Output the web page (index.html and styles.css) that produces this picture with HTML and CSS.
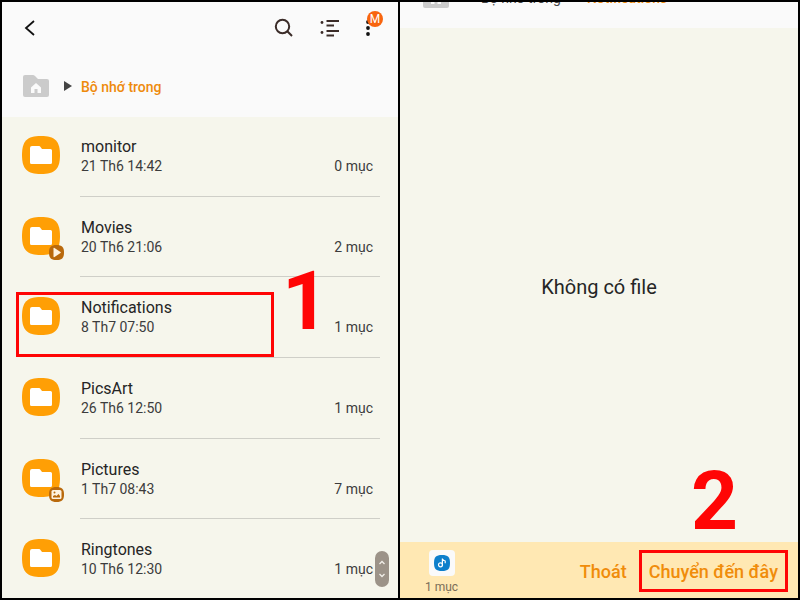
FILE: index.html
```html
<!DOCTYPE html>
<html lang="vi">
<head>
  <meta charset="UTF-8">
  <meta name="viewport" content="width=device-width, initial-scale=1.0">
  <title>Bộ nhớ trong</title>
  <link rel="stylesheet" href="styles.css">
</head>
<body>
  <svg class="defs" aria-hidden="true">
    <symbol id="folder" viewBox="0 0 38 38">
      <path fill="#ff9f05" d="M19 0C33 0 38 5 38 19S33 38 19 38 0 33 0 19 5 0 19 0Z"/>
      <path fill="#fff" d="M10 10h7q1 0 1.500 1l1.500 2h8.500q1.500 0 1.500 1.500v12q0 1.500-1.500 1.500H9.500Q8 28 8 26.500V12q0-2 2-2Z"/>
    </symbol>
    <symbol id="home" viewBox="0 0 26 22">
      <path fill="#cbcbcb" d="M2 0h8q1 0 2 1l3 3h9q2 0 2 2v14q0 2-2 2H2q-2 0-2-2V2q0-2 2-2Z"/>
      <path fill="#fafafa" d="M13 8l5 4.500V18h-3.500v-4h-3v4H8v-5.500Z"/>
    </symbol>
  </svg>

  <div class="screens">
    <section class="screen">
      <header class="header">
        <div class="toolbar">
          <button class="icon-btn back" aria-label="Quay lại">
            <svg width="12" height="18" viewBox="0 0 12 18"><path d="M10 2L2 9l8 7" fill="none" stroke="#111" stroke-width="1.800"/></svg>
          </button>
          <button class="icon-btn" aria-label="Tìm kiếm">
            <svg width="20" height="20" viewBox="0 0 20 20" fill="none" stroke="#3b2c28" stroke-width="2"><circle cx="8.500" cy="8.500" r="6.700"/><path d="M13.300 13.300L18 18"/></svg>
          </button>
          <button class="icon-btn" aria-label="Sắp xếp">
            <svg width="20" height="18" viewBox="0 0 20 18" fill="#3b2c28"><circle cx="2" cy="3.500" r="1.400"/><circle cx="2" cy="13.500" r="1.400"/><path d="M6.500 1H19v2H6.500zM6.500 5.500H14v2H6.500zM6.500 11H19v2H6.500zM6.500 15.500H14v2H6.500z"/></svg>
          </button>
          <button class="icon-btn more" aria-label="Thêm">
            <svg width="4" height="18" viewBox="0 0 4 18" fill="#111"><circle cx="2" cy="3" r="1.900"/><circle cx="2" cy="9" r="1.900"/><circle cx="2" cy="15" r="1.900"/></svg>
            <span class="badge">M</span>
          </button>
        </div>
        <nav class="breadcrumb">
          <svg class="home"><use href="#home"/></svg>
          <span class="arrow"></span>
          <a class="current" href="#">Bộ nhớ trong</a>
        </nav>
      </header>

      <ul class="files">
        <li class="file">
          <div class="thumb"><svg class="folder"><use href="#folder"/></svg></div>
          <div class="info"><div class="name">monitor</div><div class="date">21 Th6 14:42</div></div>
          <div class="count">0 mục</div>
        </li>
        <li class="file">
          <div class="thumb">
            <svg class="folder"><use href="#folder"/></svg>
            <svg class="mark" viewBox="0 0 15 15"><path fill="#b9690c" d="M7.500 0C13 0 15 2 15 7.500S13 15 7.500 15 0 13 0 7.500 2 0 7.500 0Z"/><path fill="#fff3e0" d="M4.500 3.500q0-1 1-.5l6 4q.6.500 0 1l-6 4q-1 .5-1-.5Z"/></svg>
          </div>
          <div class="info"><div class="name">Movies</div><div class="date">20 Th6 21:06</div></div>
          <div class="count">2 mục</div>
        </li>
        <li class="file">
          <div class="thumb"><svg class="folder"><use href="#folder"/></svg></div>
          <div class="info"><div class="name">Notifications</div><div class="date">8 Th7 07:50</div></div>
          <div class="count">1 mục</div>
        </li>
        <li class="file">
          <div class="thumb"><svg class="folder"><use href="#folder"/></svg></div>
          <div class="info"><div class="name">PicsArt</div><div class="date">26 Th6 12:50</div></div>
          <div class="count">1 mục</div>
        </li>
        <li class="file">
          <div class="thumb">
            <svg class="folder"><use href="#folder"/></svg>
            <svg class="mark" viewBox="0 0 15 15"><path fill="#b9690c" d="M7.500 0C13 0 15 2 15 7.500S13 15 7.500 15 0 13 0 7.500 2 0 7.500 0Z"/><rect x="2.500" y="3" width="10" height="9" rx="1.500" fill="#fff3e0"/><path fill="#b9690c" d="M4 10.500V9l2-1 1.500 1L9.500 7 11 9v1.500Z"/><circle cx="5.500" cy="5.500" r="1" fill="#b9690c"/></svg>
          </div>
          <div class="info"><div class="name">Pictures</div><div class="date">1 Th7 08:43</div></div>
          <div class="count">7 mục</div>
        </li>
        <li class="file">
          <div class="thumb"><svg class="folder"><use href="#folder"/></svg></div>
          <div class="info"><div class="name">Ringtones</div><div class="date">10 Th6 12:30</div></div>
          <div class="count">1 mục</div>
        </li>
      </ul>

      <div class="scroll-handle">
        <svg width="14" height="36" viewBox="0 0 14 36" fill="none" stroke="#f2efe8" stroke-width="1.300"><path d="M4.500 13L7 10.500 9.500 13M4.500 23L7 25.500 9.500 23"/></svg>
      </div>
      <div class="outline outline-row"></div>
      <div class="step step-one">1</div>
    </section>

    <section class="screen">
      <header class="header scrolled">
        <nav class="breadcrumb">
          <svg class="home"><use href="#home"/></svg>
          <span class="arrow"></span>
          <a href="#">Bộ nhớ trong</a>
          <span class="arrow"></span>
          <a class="current" href="#">Notifications</a>
        </nav>
      </header>
      <div class="empty">Không có file</div>
      <footer class="move-bar">
        <div class="clip">
          <div class="clip-icon">
            <svg width="16" height="16" viewBox="0 0 16 16"><path fill="#0d7fcb" d="M8 0C14 0 16 2 16 8S14 16 8 16 0 14 0 8 2 0 8 0Z"/><circle cx="6.500" cy="9.800" r="2" fill="none" stroke="#fff" stroke-width="1.200"/><path d="M8.400 10V3.500q.4 2 2.800 2.500v2.300" fill="none" stroke="#fff" stroke-width="1.200"/></svg>
          </div>
          <div class="clip-count">1 mục</div>
        </div>
        <button class="action">Thoát</button>
        <button class="action">Chuyển đến đây</button>
      </footer>
      <div class="outline outline-action"></div>
      <div class="step step-two">2</div>
    </section>
  </div>
</body>
</html>
```
FILE: styles.css
```css
* {
  box-sizing: border-box;
  margin: 0;
  padding: 0;
}

body {
  background: #000;
  font-family: Roboto, sans-serif;
  color: #252525;
}

.defs {
  position: absolute;
  width: 0;
  height: 0;
}

.screens {
  display: grid;
  grid-template-columns: 199fr 200fr;
  gap: 2px;
  height: 100vh;
  padding: 2px;
}

.screen {
  position: relative;
  display: flex;
  flex-direction: column;
  min-height: 0;
  overflow: hidden;
  background: #f6f6ec;
}

/* header */
.header {
  flex: none;
  height: 115px;
  background: #fafafa;
}

.toolbar {
  display: flex;
  align-items: center;
  gap: 26px;
  height: 52px;
  padding: 0 28px 0 22px;
}

.icon-btn {
  display: flex;
  background: none;
  border: none;
  cursor: pointer;
}

.back {
  margin-right: auto;
}

.more {
  position: relative;
}

.badge {
  position: absolute;
  top: -8px;
  left: 1px;
  width: 16px;
  height: 16px;
  border-radius: 50%;
  background: #f8650f;
  color: #fff;
  font-family: Roboto, sans-serif;
  font-size: 12px;
  line-height: 16px;
  text-align: center;
}

.breadcrumb {
  display: flex;
  align-items: center;
  height: 64px;
  padding-left: 21px;
  font-size: 14px;
}

.breadcrumb a {
  padding-top: 2px;
  color: #444;
  text-decoration: none;
}

.breadcrumb a.current {
  color: #ee8a0c;
  font-weight: 500;
}

.home {
  width: 26px;
  height: 22px;
}

.arrow {
  margin: 0 9px 0 15px;
  border-left: 8px solid #444;
  border-top: 5px solid transparent;
  border-bottom: 5px solid transparent;
}

a + .arrow {
  margin: 0 12px 0 6px;
}

.scrolled {
  display: flex;
  align-items: flex-start;
  height: 26px;
  padding-left: 2px;
  overflow: hidden;
}

.scrolled .breadcrumb {
  margin-top: -37px;
}

/* file list */
.files {
  display: grid;
  grid-template-rows: repeat(6, 1fr);
  flex: none;
  height: 484px;
  margin-top: -1px;
  list-style: none;
}

.file {
  display: flex;
  position: relative;
  padding: 20px 25px 0 20px;
}

.file:not(:last-child)::after {
  content: "";
  position: absolute;
  left: 78px;
  right: 18px;
  bottom: 0;
  height: 1px;
  background: #cfcfc8;
}

.thumb {
  position: relative;
  width: 59px;
}

.folder {
  width: 38px;
  height: 38px;
}

.mark {
  position: absolute;
  top: 28px;
  left: 27px;
  width: 15px;
  height: 15px;
}

.info {
  flex: 1;
}

.name {
  font-size: 16px;
  line-height: 22px;
}

.date,
.count {
  font-size: 14px;
  line-height: 16px;
  color: #3c3c3c;
}

.count {
  padding-top: 22px;
}

.scroll-handle {
  position: absolute;
  right: 9px;
  bottom: 11px;
  width: 14px;
  height: 36px;
  border-radius: 7px;
  background: #9c9388;
}

/* empty folder screen */
.empty {
  flex: 1;
  display: flex;
  align-items: center;
  justify-content: center;
  padding-top: 4px;
  font-size: 20px;
}

.move-bar {
  display: flex;
  align-items: center;
  gap: 22px;
  height: 56px;
  padding: 0 20px 0 25px;
  background: #ffe8b3;
}

.clip {
  margin-right: auto;
  padding-top: 5px;
  text-align: center;
}

.clip-icon {
  display: flex;
  align-items: center;
  justify-content: center;
  width: 26px;
  height: 26px;
  margin: 0 auto 3px;
  border-radius: 4px;
  background: #fafafa;
}

.clip-count {
  font-size: 12px;
  line-height: 16px;
  color: #7a6d58;
}

.action {
  padding-top: 2px;
  background: none;
  border: none;
  font-family: inherit;
  font-size: 18px;
  font-weight: 500;
  color: #f08c0a;
  cursor: pointer;
}

/* step marks */
.outline {
  position: absolute;
  border: 3px solid #ff0505;
  pointer-events: none;
}

.outline-row {
  top: 290px;
  left: 14px;
  width: 258px;
  height: 65px;
}

.outline-action {
  right: 10px;
  bottom: 6px;
  width: 149px;
  height: 42px;
}

.step {
  position: absolute;
  font-size: 82px;
  font-weight: bold;
  line-height: 82px;
  color: #ff0505;
}

.step-one {
  top: 258px;
  left: 280px;
}

.step-two {
  right: 60px;
  bottom: 56px;
}
```
